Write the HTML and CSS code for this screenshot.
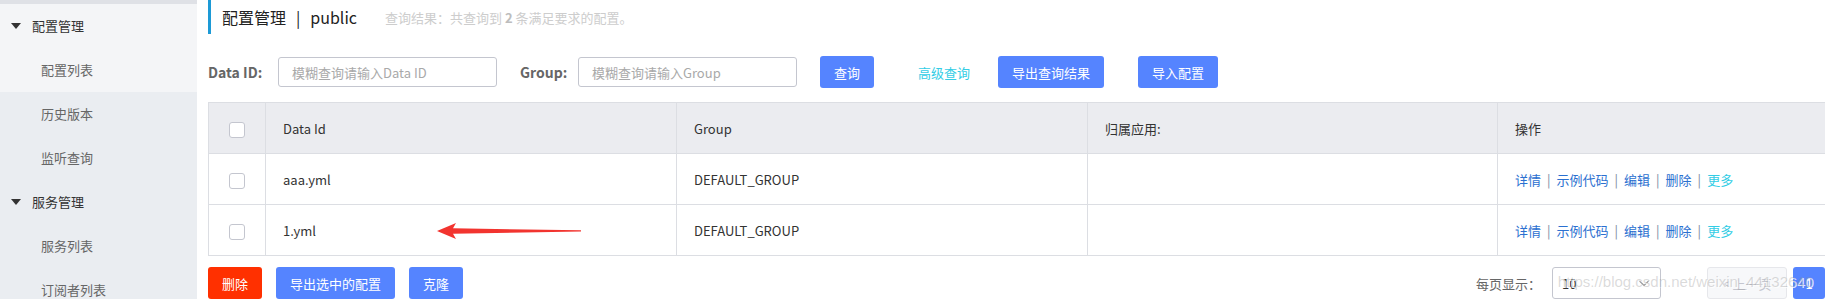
FILE: index.html
```html
<!DOCTYPE html>
<html lang="zh-CN">
<head>
    <meta charset="UTF-8">
    <meta name="viewport" content="width=device-width, initial-scale=1.0">
    <title>配置列表</title>
    <link rel="stylesheet" href="styles.css">
</head>
<body>
    <!-- 侧边导航 -->
    <div class="sidebar">
        <div class="sidebar-top"></div>
        <div class="nav-title light"><span class="caret"></span>配置管理</div>
        <div class="nav-item light">配置列表</div>
        <div class="nav-item">历史版本</div>
        <div class="nav-item">监听查询</div>
        <div class="nav-title"><span class="caret"></span>服务管理</div>
        <div class="nav-item">服务列表</div>
        <div class="nav-item">订阅者列表</div>
    </div>

    <div class="main">
        <div class="page-title">
            <span class="title">配置管理<span class="divider">|</span>public</span>
            <span class="summary">查询结果：共查询到 <b>2</b> 条满足要求的配置。</span>
        </div>

        <!-- 查询条件 -->
        <div class="search">
            <label class="search-label label-id">Data ID:</label>
            <input class="search-input" type="text" placeholder="模糊查询请输入Data ID">
            <label class="search-label label-group">Group:</label>
            <input class="search-input" type="text" placeholder="模糊查询请输入Group">
            <button class="btn btn-primary btn-query">查询</button>
            <a class="link-advanced" href="#">高级查询</a>
            <button class="btn btn-primary btn-export">导出查询结果</button>
            <button class="btn btn-primary btn-import">导入配置</button>
        </div>

        <!-- 配置列表 -->
        <table class="config-table">
            <colgroup>
                <col style="width: 57px">
                <col style="width: 411px">
                <col style="width: 411px">
                <col style="width: 410px">
                <col style="width: 412px">
            </colgroup>
            <thead>
                <tr>
                    <th class="check-cell"><span class="checkbox"></span></th>
                    <th>Data Id</th>
                    <th>Group</th>
                    <th>归属应用:</th>
                    <th>操作</th>
                </tr>
            </thead>
            <tbody>
                <tr>
                    <td class="check-cell"><span class="checkbox"></span></td>
                    <td>aaa.yml</td>
                    <td>DEFAULT_GROUP</td>
                    <td></td>
                    <td class="ops">
                        <a href="#">详情</a><span class="sep">|</span><a href="#">示例代码</a><span class="sep">|</span><a href="#">编辑</a><span class="sep">|</span><a href="#">删除</a><span class="sep">|</span><a class="more" href="#">更多</a>
                    </td>
                </tr>
                <tr>
                    <td class="check-cell"><span class="checkbox"></span></td>
                    <td class="mark-cell">1.yml
                        <!-- 标注箭头 -->
                        <svg class="arrow" width="150" height="20" viewBox="0 0 150 20">
                            <polygon points="1,10 20,2 17,7.3 145,9.3 145,10.5 17,12.7 20,18" fill="#f2342f"/>
                        </svg>
                    </td>
                    <td>DEFAULT_GROUP</td>
                    <td></td>
                    <td class="ops">
                        <a href="#">详情</a><span class="sep">|</span><a href="#">示例代码</a><span class="sep">|</span><a href="#">编辑</a><span class="sep">|</span><a href="#">删除</a><span class="sep">|</span><a class="more" href="#">更多</a>
                    </td>
                </tr>
            </tbody>
        </table>

        <!-- 批量操作与分页 -->
        <div class="footer-bar">
            <div class="batch">
                <button class="btn btn-danger">删除</button>
                <button class="btn btn-primary">导出选中的配置</button>
                <button class="btn btn-primary">克隆</button>
            </div>
            <div class="pager">
                <span class="pager-label">每页显示：</span>
                <div class="page-size">
                    <span>10</span>
                    <svg width="12" height="8" viewBox="0 0 12 8"><polyline points="1,1.5 6,6.5 11,1.5" fill="none" stroke="#999" stroke-width="1.2"/></svg>
                </div>
                <button class="page-btn page-prev">&lt; 上一页</button>
                <button class="page-btn page-current">1</button>
                <button class="page-btn page-next">下一页 &gt;</button>
                <span class="watermark">https://blog.csdn.net/weixin_44132640</span>
            </div>
        </div>
    </div>
</body>
</html>
```

FILE: styles.css
```css
* {
    box-sizing: border-box;
    margin: 0;
    padding: 0;
}

html, body {
    height: 100%;
    overflow: hidden;
}

body {
    display: flex;
    font-family: "Noto Sans CJK SC", "Noto Sans", sans-serif;
    font-size: 13px;
    color: #333;
    background: #fff;
}

/* 侧边导航 */
.sidebar {
    flex: 0 0 197px;
    background: #eaedf1;
}

.sidebar-top {
    height: 4px;
    background: #dfe1e6;
}

.nav-title,
.nav-item {
    height: 44px;
    line-height: 44px;
    font-size: 13px;
    white-space: nowrap;
}

.nav-title {
    padding-left: 11px;
    color: #333;
}

.nav-item {
    padding-left: 41px;
    color: #666;
}

.light {
    background: #f4f5f7;
}

.caret {
    display: inline-block;
    width: 0;
    height: 0;
    border-left: 5px solid transparent;
    border-right: 5px solid transparent;
    border-top: 6px solid #333;
    margin-right: 11px;
    vertical-align: 2px;
}

/* 主区域 */
.main {
    flex: 0 0 auto;
    width: 1712px;
    padding-left: 11px;
}

.page-title {
    height: 34px;
    border-left: 3px solid #1d9ad6;
    padding-left: 11px;
    display: flex;
    align-items: center;
}

.title {
    font-size: 16px;
    color: #222;
}

.divider {
    margin: 0 10px;
}

.summary {
    margin-left: 28px;
    color: #cdcdcd;
    font-size: 13px;
}

.summary b {
    color: #bdbdbd;
}

/* 查询条件 */
.search {
    display: flex;
    align-items: center;
    height: 32px;
    margin-top: 22px;
}

.search-label {
    font-size: 14px;
    font-weight: bold;
    color: #666;
}

.label-id {
    width: 70px;
}

.label-group {
    width: 58px;
    margin-left: 23px;
}

.search-input {
    width: 219px;
    height: 30px;
    border: 1px solid #c4c6cf;
    border-radius: 3px;
    padding: 0 13px;
    font-family: inherit;
    font-size: 13px;
    color: #333;
    outline: none;
}

.search-input::placeholder {
    color: #a9a9a9;
}

.btn {
    height: 32px;
    padding: 0 14px;
    border: none;
    border-radius: 3px;
    font-family: inherit;
    font-size: 13px;
    color: #fff;
    cursor: pointer;
}

.btn-primary {
    background: #5584ff;
}

.btn-danger {
    background: #ff3000;
}

.btn-query {
    margin-left: 23px;
}

.link-advanced {
    margin-left: 44px;
    color: #33cde5;
    text-decoration: none;
}

.btn-export {
    margin-left: 28px;
}

.btn-import {
    margin-left: 34px;
}

/* 表格 */
.config-table {
    width: 1701px;
    margin-top: 14px;
    border-collapse: collapse;
    table-layout: fixed;
    border: 1px solid #dcdee3;
}

.config-table th,
.config-table td {
    height: 51px;
    padding: 0 17px;
    border: 1px solid #dcdee3;
    text-align: left;
    font-weight: normal;
    font-size: 13px;
    color: #333;
    white-space: nowrap;
}

.config-table th {
    background: #ebecf0;
}

.config-table .check-cell {
    padding: 0;
    text-align: center;
}

.checkbox {
    display: inline-block;
    width: 16px;
    height: 16px;
    border: 1px solid #c4c6cf;
    border-radius: 3px;
    background: #fff;
    vertical-align: middle;
}

.mark-cell {
    position: relative;
}

.arrow {
    position: absolute;
    left: 170px;
    top: 16px;
}

.ops a {
    color: #2b70d0;
    text-decoration: none;
}

.ops a.more {
    color: #33cde5;
}

.ops .sep {
    margin: 0 6px;
    color: #7a8aa0;
}

/* 底部 */
.footer-bar {
    display: flex;
    justify-content: space-between;
    align-items: center;
    margin-top: 11px;
    width: 1701px;
}

.batch .btn {
    margin-right: 7px;
}

.batch .btn + .btn {
    margin-left: 4px;
}

.pager {
    position: relative;
    display: flex;
    align-items: center;
}

.pager-label {
    color: #666;
    margin-right: 11px;
}

.page-size {
    width: 109px;
    height: 32px;
    border: 1px solid #c4c6cf;
    border-radius: 3px;
    padding: 0 10px 0 9px;
    display: flex;
    align-items: center;
    justify-content: space-between;
    color: #333;
}

.page-btn {
    height: 32px;
    border-radius: 3px;
    font-family: inherit;
    font-size: 13px;
}

.page-prev {
    width: 80px;
    margin-left: 46px;
    background: #f7f8fa;
    border: 1px solid #e6e7eb;
    color: #c4c6cf;
}

.page-current {
    width: 32px;
    margin-left: 6px;
    background: #5584ff;
    border: none;
    color: #fff;
}

.page-next {
    width: 80px;
    margin-left: 4px;
    background: #fff;
    border: 1px solid #c4c6cf;
    color: #333;
}

.watermark {
    position: absolute;
    right: 96px;
    top: 6px;
    font-family: "Liberation Sans", sans-serif;
    font-size: 15px;
    color: rgba(150, 150, 150, 0.35);
    text-shadow: 1px 1px 0 rgba(255, 255, 255, 0.8);
    white-space: nowrap;
    pointer-events: none;
}
```
